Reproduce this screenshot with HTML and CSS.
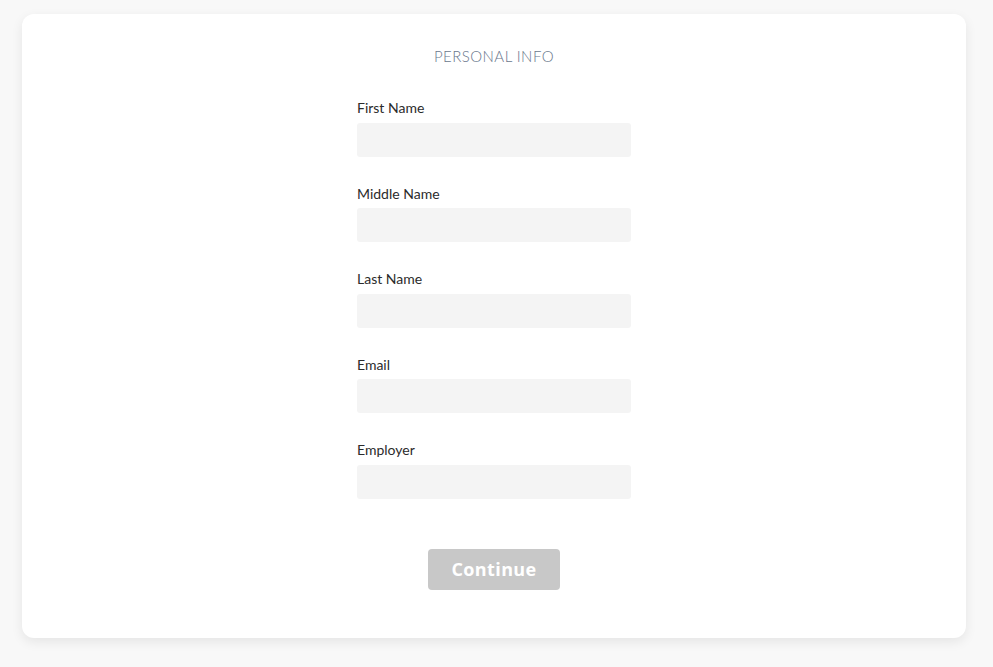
FILE: index.html
```html
<!DOCTYPE html>
<html>
<head>
<meta charset="utf-8">
<link rel="stylesheet" href="styles.css">
</head>
<body>
<div class="card">
  <h1 class="title">PERSONAL INFO</h1>
  <form class="form">
    <div class="field"><label>First Name</label><input type="text"></div>
    <div class="field"><label>Middle Name</label><input type="text"></div>
    <div class="field"><label>Last Name</label><input type="text"></div>
    <div class="field"><label>Email</label><input type="text"></div>
    <div class="field"><label>Employer</label><input type="text"></div>
    <div class="actions"><button type="button" class="btn">Continue</button></div>
  </form>
</div>
</body>
</html>
```

FILE: styles.css
```css
html, body {
  margin: 0;
  padding: 0;
  background: #f8f8f8;
}
body {
  padding: 14px 27px 29px 22px;
  font-family: Lato, "Open Sans", sans-serif;
}
.card {
  background: #fff;
  border-radius: 12px;
  box-shadow: 0 4px 12px rgba(0,0,0,0.08);
  height: 624px;
  box-sizing: border-box;
  padding-top: 33px;
}
.title {
  margin: 0;
  text-align: center;
  font-weight: 300;
  font-size: 15px;
  line-height: 18px;
  letter-spacing: 0.45px;
  color: #6a778c;
}
.form {
  width: 274px;
  margin: 34px auto 0;
}
.field {
  margin-bottom: 28px;
}
.field label {
  display: block;
  font-size: 14px;
  line-height: 17px;
  color: #2b2b2b;
  margin-bottom: 6.5px;
}
.field input {
  display: block;
  width: 100%;
  height: 34px;
  box-sizing: border-box;
  border: none;
  border-radius: 3px;
  background: #f4f4f4;
  outline: none;
}
.actions {
  display: flex;
  justify-content: center;
  padding-top: 22px;
}
.btn {
  width: 132px;
  height: 41px;
  border: none;
  border-radius: 4px;
  background: #c8c8c8;
  color: #fff;
  font-family: "Open Sans", sans-serif;
  font-weight: 700;
  font-size: 18px;
  letter-spacing: 0.4px;
}
```
